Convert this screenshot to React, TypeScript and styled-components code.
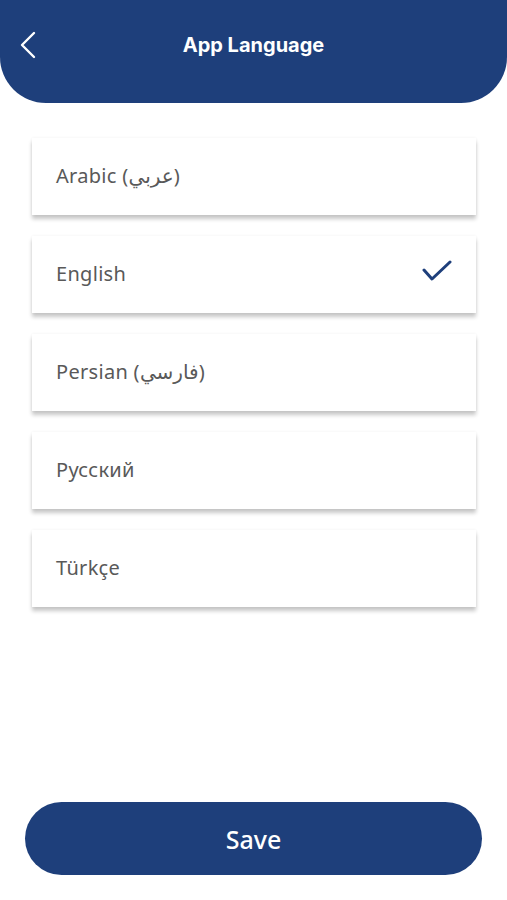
import React, { useState } from 'react'
import styled, { createGlobalStyle } from 'styled-components';

const navy = '#1e3f7b';

const GlobalStyle = createGlobalStyle`
  html, body {
    margin: 0;
    padding: 0;
    background: #ffffff;
  }
  body {
    font-family: "Noto Sans", "DejaVu Sans", sans-serif;
  }
`;

const languages = ['Arabic (عربي)', 'English', 'Persian (فارسي)', 'Русский', 'Türkçe'];

const BackIcon = () => (
  <svg width="18" height="30" viewBox="0 0 18 30" fill="none">
    <path d="M15 2 L3 14 L15 26" stroke="#ffffff" strokeWidth="2.4" strokeLinecap="round" strokeLinejoin="round" />
  </svg>
);

const CheckIcon = () => (
  <svg width="30" height="22" viewBox="0 0 30 22" fill="none">
    <path d="M2 10 L10 19 L28 2" stroke={navy} strokeWidth="3" strokeLinecap="round" strokeLinejoin="round" />
  </svg>
);

export default function App() {
  const [selected, setSelected] = useState('English');

  return (
    <>
      <GlobalStyle />
      <Styled.Page>
        <Styled.Header>
          <Styled.Back aria-label="Back">
            <BackIcon />
          </Styled.Back>
          <Styled.Title>App Language</Styled.Title>
        </Styled.Header>

        <Styled.List>
          {languages.map(lang => (
            <Styled.Card key={lang} onClick={() => setSelected(lang)}>
              <Styled.Label>{lang}</Styled.Label>
              {selected === lang && (
                <Styled.Check>
                  <CheckIcon />
                </Styled.Check>
              )}
            </Styled.Card>
          ))}
        </Styled.List>

        <Styled.Footer>
          <Styled.SaveButton>Save</Styled.SaveButton>
        </Styled.Footer>
      </Styled.Page>
    </>
  )
}

const Styled = {
  Page: styled.div`
  display: flex;
  flex-direction: column;
  min-height: 100vh;
  `,
  Header: styled.header`
  position: relative;
  display: flex;
  align-items: flex-start;
  justify-content: center;
  height: 103px;
  padding-top: 31px;
  box-sizing: border-box;
  background: ${navy};
  border-radius: 0 0 46px 46px;
  `,
  Back: styled.button`
  position: absolute;
  left: 19px;
  top: 31px;
  padding: 0;
  border: none;
  background: none;
  cursor: pointer;
  `,
  Title: styled.h1`
  margin: 0;
  color: #ffffff;
  font-family: Inter, "Noto Sans", sans-serif;
  font-size: 20px;
  font-weight: 700;
  line-height: 28px;
  `,
  List: styled.div`
  display: flex;
  flex-direction: column;
  gap: 21px;
  padding: 35px 31px 0 32px;
  `,
  Card: styled.div`
  display: flex;
  align-items: center;
  justify-content: space-between;
  height: 77px;
  padding: 0 24px;
  background: #ffffff;
  box-shadow: 0 4px 4px rgba(0, 0, 0, 0.22), 0 0 3px rgba(0, 0, 0, 0.06);
  cursor: pointer;
  `,
  Label: styled.span`
  margin-bottom: 3px;
  color: #595959;
  font-family: "Noto Sans", "DejaVu Sans", sans-serif;
  font-size: 20px;
  letter-spacing: 0.3px;
  `,
  Check: styled.span`
  display: flex;
  margin-bottom: 8px;
  `,
  Footer: styled.div`
  margin-top: auto;
  padding: 0 25px 25px 25px;
  `,
  SaveButton: styled.button`
  width: 100%;
  height: 73px;
  border: none;
  border-radius: 37px;
  background: ${navy};
  color: #ffffff;
  font-family: "Noto Sans", sans-serif;
  font-size: 25px;
  font-weight: 500;
  cursor: pointer;
  `
}
